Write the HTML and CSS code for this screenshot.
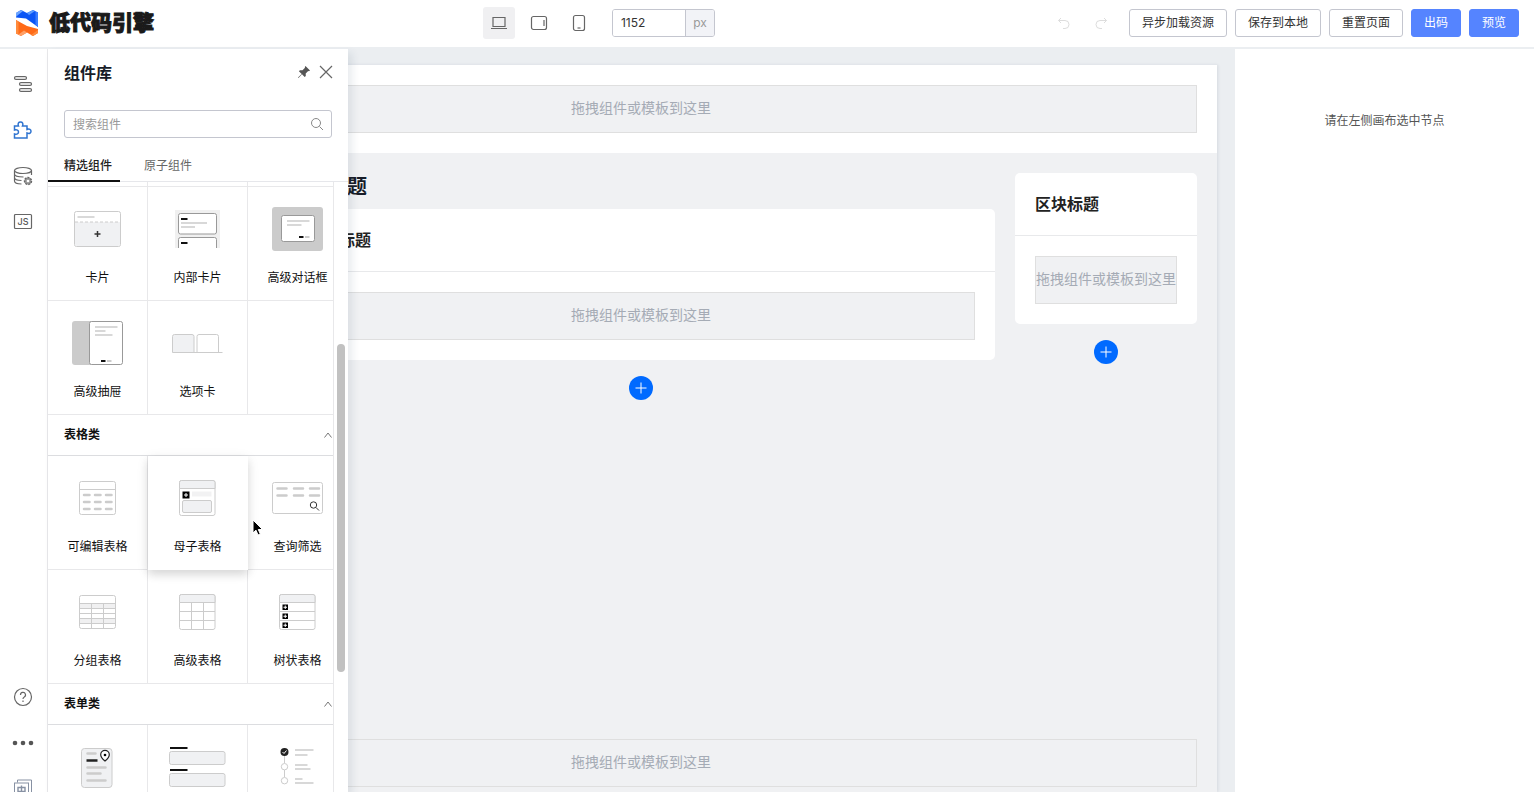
FILE: index.html
```
<!DOCTYPE html>
<html lang="zh-CN">
<head>
<meta charset="utf-8">
<meta name="viewport" content="width=device-width, initial-scale=1">
<title>低代码引擎</title>
<link rel="stylesheet" href="styles.css">
</head>
<body>
<div class="app">
  <header class="topbar">
    <a class="brand" href="#">
      <svg width="24" height="28" viewBox="0 0 24 28" aria-hidden="true">
        <path d="M1 4 6 1 12 4 18 1 23 3.500V18L11 9.500 1 8.500Z" fill="#0b55f5"/>
        <path d="M1 4 6 1 8 2 3 6 1 8Z" fill="#6ea6ff"/>
        <path d="M12 4 18 1 20 2 14 6Z" fill="#5c9cff"/>
        <path d="M20.500 2.500 23 3.500V18L20.500 16Z" fill="#3a7dff"/>
        <path d="M1 11 12 17 23 20V24L18 27 12 23.500 6 27 1 24.500Z" fill="#ff6a18"/>
        <path d="M1 11 3.500 12.500V25.500L1 24.500Z" fill="#ff8b3d"/>
        <path d="M6 27 3.500 25.500 9 21.500 12 23.500Z" fill="#ffa066"/>
        <path d="M18 27 16 26 23 21V24Z" fill="#ff8b3d"/>
      </svg>
      <span class="brand-name">低代码引擎</span>
    </a>
    <div class="devices">
      <button class="device is-active" type="button" aria-label="桌面"><svg width="18" height="16" viewBox="0 0 18 16"><path d="M3 2.500h12v9H3zM1 13.500h16" class="ln"/></svg></button>
      <button class="device" type="button" aria-label="平板"><svg width="18" height="16" viewBox="0 0 18 16"><rect x="1.500" y="1.500" width="15" height="13" rx="2" class="ln"/><path d="M14 5v6" class="ln"/></svg></button>
      <button class="device" type="button" aria-label="手机"><svg width="14" height="18" viewBox="0 0 14 18"><rect x="1.500" y="1.500" width="11" height="15" rx="2" class="ln"/><path d="M5.500 14h3" class="ln"/></svg></button>
      <label class="size"><input type="text" value="1152" aria-label="画布宽度"><span>px</span></label>
    </div>
    <div class="actions">
      <button class="history" type="button" aria-label="撤销"><svg width="14" height="14" viewBox="0 0 14 14"><path d="M4 2 1.500 4.500 4 7M1.500 4.500H8a4 4 0 0 1 0 8H6"/></svg></button>
      <button class="history" type="button" aria-label="重做"><svg width="14" height="14" viewBox="0 0 14 14"><path d="M10 2l2.500 2.500L10 7M12.500 4.500H6a4 4 0 0 0 0 8h2"/></svg></button>
      <button class="btn" type="button">异步加载资源</button>
      <button class="btn" type="button">保存到本地</button>
      <button class="btn" type="button">重置页面</button>
      <button class="btn primary" type="button">出码</button>
      <button class="btn primary" type="button">预览</button>
    </div>
  </header>

  <div class="workspace">
    <nav class="rail">
      <button type="button" aria-label="大纲树"><svg width="20" height="20" viewBox="0 0 20 20"><g class="ln" fill="#ddd"><rect x="1.500" y="2.500" width="12" height="3" rx="1.500"/><rect x="6.500" y="8.500" width="12" height="3" rx="1.500"/><rect x="6.500" y="14.500" width="12" height="3" rx="1.500"/></g></svg></button>
      <button type="button" aria-label="组件库" class="is-active"><svg width="20" height="20" viewBox="0 0 20 20"><path d="M1.500 6H5.500C4.500 3.500 5.500 2 7.500 2s3 1.500 2 4H14V9.500c2.500-1 4 0 4 1.800s-1.500 2.700-4 1.700V18H1.500V14c2.500.8 4-.3 4-2s-1.500-2.800-4-2Z"/></svg></button>
      <button type="button" aria-label="数据源"><svg width="20" height="20" viewBox="0 0 20 20"><g class="ln"><ellipse cx="10" cy="4.500" rx="8.500" ry="3"/><path d="M1.500 4.500V15c0 2 3 3 7 3M18.500 4.500V9M1.500 8c0 2 4 3 9 3M1.500 11.500c0 2 3 3 7 3"/></g><circle cx="15" cy="15" r="3.500" fill="#999" stroke="#666" stroke-dasharray="2 1.100" stroke-width="1.400"/><circle cx="15" cy="15" r="1.300" fill="#fff"/></svg></button>
      <button type="button" aria-label="源码面板"><svg width="20" height="18" viewBox="0 0 20 18"><rect x="1.500" y="1.500" width="17" height="14" rx="1" class="ln"/><text x="10" y="12" text-anchor="middle" class="js">JS</text></svg></button>
      <div class="rail-end">
        <button type="button" aria-label="帮助"><svg width="20" height="20" viewBox="0 0 20 20"><circle cx="10" cy="10" r="8.500" class="ln"/><path d="M7.500 8a2.500 2.500 0 1 1 3.500 2.200c-.8.400-1 .8-1 1.800M10 13.500V15" class="ln"/></svg></button>
        <button type="button" aria-label="更多"><svg width="22" height="6" viewBox="0 0 22 6"><g fill="#555"><circle cx="3" cy="3" r="2.300"/><circle cx="11" cy="3" r="2.300"/><circle cx="19" cy="3" r="2.300"/></g></svg></button>
        <button type="button" aria-label="切换语言"><svg width="20" height="20" viewBox="0 0 20 20"><g fill="none" stroke="#8791a3"><path d="M4.500 3.500V1h14v14h-3"/><rect x="1.500" y="4" width="14" height="14"/><path d="M5 8.500h7v4H5zM8.500 6.500v9" stroke-width="1.400"/></g></svg></button>
      </div>
    </nav>

    <main class="canvas">
      <div class="page">
        <div class="page-head"><div class="slot">拖拽组件或模板到这里</div></div>
        <div class="page-body">
          <section class="group">
            <h2>分组标题</h2>
            <article class="block">
              <h3>区块标题</h3>
              <div class="block-body"><div class="slot">拖拽组件或模板到这里</div></div>
            </article>
            <button class="add" type="button" aria-label="添加区块"><svg width="12" height="12" viewBox="0 0 12 12"><path d="M6 0.500v11M0.500 6h11"/></svg></button>
          </section>
          <aside class="side">
            <article class="block">
              <h3>区块标题</h3>
              <div class="block-body"><div class="slot">拖拽组件或模板到这里</div></div>
            </article>
            <button class="add" type="button" aria-label="添加区块"><svg width="12" height="12" viewBox="0 0 12 12"><path d="M6 0.500v11M0.500 6h11"/></svg></button>
          </aside>
        </div>
        <div class="page-foot"><div class="slot">拖拽组件或模板到这里</div></div>
      </div>
    </main>

    <aside class="props">请在左侧画布选中节点</aside>

    <section class="panel">
      <div class="panel-head">
        <h1>组件库</h1>
        <button type="button" aria-label="固定"><svg width="14" height="14" viewBox="0 0 14 14"><path d="M8.500 1 13 5.500l-1 .7-.8-.2-2.500 2.500.1 2.600-1.100 1L5 9.300 1.500 13 1 12.500 4.700 9 1.900 6.300l1-1.100 2.600.1L8 2.800 7.800 2Z" fill="#555"/></svg></button>
        <button type="button" aria-label="关闭"><svg width="14" height="14" viewBox="0 0 14 14"><path d="M1 1l12 12M13 1 1 13" class="ln"/></svg></button>
      </div>
      <div class="search">
        <input type="text" placeholder="搜索组件" aria-label="搜索组件">
        <svg width="14" height="14" viewBox="0 0 14 14"><circle cx="6" cy="6" r="4.500"/><path d="M9.500 9.500l3.500 3.500"/></svg>
      </div>
      <div class="tabs" role="tablist">
        <button type="button" role="tab" aria-selected="true">精选组件</button>
        <button type="button" role="tab" aria-selected="false">原子组件</button>
      </div>
      <div class="list">
        <div class="cells tail"><div></div><div></div><div></div></div>
        <div class="cells">
          <div class="cell"><svg viewBox="0 0 61 48"><rect x="7.500" y="6.500" width="46" height="35" rx="2" class="g"/><path d="M8 17h45v22a2 2 0 0 1-2 2H10a2 2 0 0 1-2-2z" fill="#f0f1f3"/><path d="M8 17h45" class="g" stroke-dasharray="3 2"/><path d="M10.500 12h17" class="b"/><path d="M30.500 26v6M27.500 29h6" stroke="#333" stroke-width="1.500"/></svg><span>卡片</span></div>
          <div class="cell"><svg viewBox="0 0 61 48"><path d="M8 5h45v38H8z" fill="#f0f0f0"/><rect x="11.500" y="8.500" width="38" height="20.500" rx="2" class="d"/><path d="M11.500 43V34.500a2 2 0 0 1 2-2h34a2 2 0 0 1 2 2V43" class="d"/><path d="M14 18h26M14 22h14" class="b"/><path d="M14 14h6.500M14 38h6.500" class="k"/></svg><span>内部卡片</span></div>
          <div class="cell"><svg viewBox="0 0 61 48"><rect x="5" y="2" width="51" height="44" rx="3" fill="#cbcbcb"/><rect x="14.500" y="10.500" width="33" height="26" rx="2" class="d"/><path d="M20 16h22.500M20 20h14.500" class="b"/><path d="M32 32h4.500" class="k"/><path d="M38 32h4.500" class="d"/></svg><span>高级对话框</span></div>
          <div class="cell"><svg viewBox="0 0 61 48"><rect x="5" y="2" width="24" height="44" rx="3" fill="#cbcbcb"/><rect x="22.500" y="2.500" width="33" height="43" rx="2" class="d"/><path d="M28 8h22.500M28 12h10.500M28 16h17.500" class="b"/><path d="M34 42h4.500" class="k"/><path d="M40 42h4.500" class="d"/></svg><span>高级抽屉</span></div>
          <div class="cell"><svg viewBox="0 0 61 48"><path d="M5.500 33.500V17.500a2 2 0 0 1 2-2h17.500a2 2 0 0 1 2 2v16" class="g f"/><path d="M30 33.500V17.500a2 2 0 0 1 2-2h17.500a2 2 0 0 1 2 2v16M5.500 33.500h50" class="g"/></svg><span>选项卡</span></div>
          <div class="cell empty"></div>
        </div>
        <button class="category" type="button"><span>表格类</span><svg width="8" height="6" viewBox="0 0 8 6"><path d="M.5 5.500 4 1l3.500 4.500"/></svg></button>
        <div class="cells">
          <div class="cell"><svg viewBox="0 0 61 48"><rect x="12.500" y="7.500" width="36" height="33" rx="2" class="g"/><path d="M12.500 15.500h36" class="g"/><path d="M17 21h5.500M28 21h5.500M39 21h5.500M17 28h5.500M28 28h5.500M39 28h5.500M17 35h5.500M28 35h5.500M39 35h5.500" class="t"/></svg><span>可编辑表格</span></div>
          <div class="cell is-hover"><svg viewBox="0 0 61 48"><rect x="12.500" y="6.500" width="35.500" height="35" rx="2" class="g"/><path d="M12.500 14.500V8.500a2 2 0 0 1 2-2H46a2 2 0 0 1 2 2v6z" class="g f"/><path d="M25 17.500h19.500v5H25z" fill="#f2f2f3"/><rect x="15.500" y="26.500" width="29" height="12" rx="1.500" class="g f"/><path d="M15.500 17.500h7v7h-7z"/><path d="M19 19v4M17 21h4" stroke="#fff"/></svg><span>母子表格</span></div>
          <div class="cell"><svg viewBox="0 0 61 48"><rect x="5.500" y="8.500" width="50" height="31" rx="2" class="g"/><path d="M10.500 14.500h9M27 14.500h9M43 14.500h9M10.500 21.500h9M27 21.500h9M43 21.500h9" class="t"/><circle cx="46.500" cy="31" r="3.200" fill="none" stroke="#333"/><path d="M49 33.500l3 3" stroke="#333"/></svg><span>查询筛选</span></div>
          <div class="cell"><svg viewBox="0 0 61 48"><path d="M12.500 15.500h36v5h-36zM12.500 30.500h36v5h-36z" fill="#f0f0f1"/><rect x="12.500" y="7.500" width="36" height="33" rx="2" class="g n"/><path d="M12.500 15.500h36M12.500 20.500h36M12.500 25.500h36M12.500 30.500h36M12.500 35.500h36M24.500 15.500v25M36.500 15.500v25" class="g"/></svg><span>分组表格</span></div>
          <div class="cell"><svg viewBox="0 0 61 48"><rect x="12.500" y="6.500" width="35.500" height="35" rx="2" class="g"/><path d="M12.500 14.500V8.500a2 2 0 0 1 2-2H46a2 2 0 0 1 2 2v6z" class="g f"/><path d="M12.500 23.500H48M12.500 32.500H48M24.500 14.500v27M36.500 14.500v27" class="g"/></svg><span>高级表格</span></div>
          <div class="cell"><svg viewBox="0 0 61 48"><rect x="12.500" y="6.500" width="35.500" height="35" rx="2" class="g"/><path d="M12.500 14.500V8.500a2 2 0 0 1 2-2H46a2 2 0 0 1 2 2v6z" class="g f"/><path d="M12.500 23.500H48M12.500 32.500H48" class="g"/><path d="M15.500 16.500h5.500v5.500h-5.500zM15.500 25.500h5.500v5.500h-5.500zM15.500 34.500h5.500v5.500h-5.500z"/><path d="M18.250 17.500v3.500M16.500 19.250H20M18.250 26.500v3.500M16.500 28.250H20M18.250 35.500v3.500M16.500 37.250H20" stroke="#fff"/></svg><span>树状表格</span></div>
        </div>
        <button class="category" type="button"><span>表单类</span><svg width="8" height="6" viewBox="0 0 8 6"><path d="M.5 5.500 4 1l3.500 4.500"/></svg></button>
        <div class="cells">
          <div class="cell" aria-label="表单"><svg viewBox="0 0 61 48"><rect x="14.500" y="5.500" width="30.500" height="39" rx="3" class="g f"/><path d="M20.500 10.500h8M20.500 24.500h18M20.500 30.500h13M20.500 37.500h18" class="t"/><path d="M19.500 17.500h11" stroke="#222" stroke-width="2.500"/><path d="M38 18c-3-2.500-4.300-4.300-4.300-6.300a4.300 4.300 0 0 1 8.600 0c0 2-1.300 3.800-4.300 6.300Z" fill="#fff" stroke="#222" stroke-width="1.200"/><circle cx="38" cy="12" r="1.300"/></svg></div>
          <div class="cell" aria-label="分组表单"><svg viewBox="0 0 61 48"><rect x="2.500" y="8.500" width="55.500" height="13" rx="2" class="g f"/><rect x="2.500" y="30.500" width="55.500" height="13" rx="2" class="g f"/><path d="M3 5h17.500M3 27h17.500" class="k"/></svg></div>
          <div class="cell" aria-label="分步表单"><svg viewBox="0 0 61 48"><path d="M17.500 13v7M17.500 27v7" class="g"/><circle cx="17.500" cy="9" r="4" fill="#222"/><path d="M15.500 9l1.500 1.500 2.500-3" stroke="#fff" fill="none"/><circle cx="17.500" cy="23.700" r="3.200" class="g"/><circle cx="17.500" cy="37.700" r="3.200" class="g"/><path d="M28 7h18.500M28 12h12.500M28 22h12.500M28 26h15.500M28 36h7.500M28 40h18.500" class="b"/></svg></div>
        </div>
      </div>
      <div class="thumb"></div>
    </section>
    <svg class="cursor" width="12" height="18" viewBox="0 0 12 18" aria-hidden="true"><path d="M1 1v13l3-2.800L6 16l2.300-1-2-4.500H10.500Z" fill="#000" stroke="#fff"/></svg>
  </div>
</div>
</body>
</html>
```
FILE: styles.css
```
* { box-sizing: border-box; }

body {
  margin: 0;
  font-family: Inter, "Noto Sans CJK SC", sans-serif;
  font-size: 12px;
  line-height: 20px;
  color: #222;
}

h1, h2, h3 { margin: 0; }

button {
  font: inherit;
  color: inherit;
  padding: 0;
  border: 0;
  background: none;
  cursor: pointer;
}

svg { display: block; flex: none; }
.ln { stroke: #666; stroke-width: 1.2; }
.ln:not(g) { fill: none; }
g.ln:not([fill]) { fill: none; }

.app {
  height: 100vh;
  display: flex;
  flex-direction: column;
  overflow: hidden;
}

/* Top bar */
.topbar {
  flex: none;
  display: flex;
  align-items: center;
  justify-content: space-between;
  height: 49px;
  padding: 0 15px 1px;
  border-bottom: 2px solid #ebeef1;
}

.brand {
  display: flex;
  align-items: center;
  gap: 10px;
  color: #1a1a1a;
  text-decoration: none;
}

.brand-name {
  font-size: 21px;
  font-weight: 900;
  line-height: 28px;
  -webkit-text-stroke: 1px #1a1a1a;
}

.devices { display: flex; align-items: center; gap: 8px; margin-right: 6px; }

.device {
  display: grid;
  place-items: center;
  width: 32px;
  height: 32px;
  border-radius: 3px;
}

.device.is-active { background: #f0f0f2; }

.size {
  display: flex;
  height: 28px;
  margin-left: 9px;
  border: 1px solid #c4c6cf;
  border-radius: 3px;
  overflow: hidden;
}

.size input {
  width: 72px;
  padding: 0 8px;
  border: 0;
  outline: 0;
  font: inherit;
  color: #333;
}

.size span {
  width: 29px;
  border-left: 1px solid #c4c6cf;
  background: #f2f3f7;
  color: #999;
  line-height: 26px;
  text-align: center;
}

.actions { display: flex; align-items: center; gap: 8px; }

.history {
  display: grid;
  place-items: center;
  width: 29px;
  height: 28px;
}

.history svg { fill: none; stroke: #ddd; }

.btn {
  height: 28px;
  padding: 0 12px;
  border: 1px solid #c4c6cf;
  border-radius: 3px;
  color: #333;
}

.history + .btn { margin-left: 5px; }

.btn.primary { border-color: #5584ff; background: #5584ff; color: #fff; }

/* Workspace */
.workspace {
  position: relative;
  flex: 1;
  min-height: 0;
  display: flex;
}

.rail {
  flex: none;
  display: flex;
  flex-direction: column;
  width: 48px;
  padding-top: 12px;
  border-right: 1px solid #e8e8ea;
  overflow: hidden;
}

.rail button {
  display: grid;
  place-items: center;
  width: 46px;
  height: 46px;
}

.rail .is-active svg { fill: none; stroke: #2f74d0; stroke-width: 1.5; }
.rail-end { margin: auto 0 -20px; }
.js { font: 500 9px Inter, sans-serif; fill: #555; }

.canvas {
  flex: 1;
  min-width: 0;
  display: flex;
  padding: 16px 18px 0 17px;
  background: #ebeef1;
}

.page {
  flex: 1;
  min-width: 0;
  display: flex;
  flex-direction: column;
  background: #f0f1f3;
  box-shadow: 1px 0 3px rgba(30, 40, 80, .1);
}

.page-head { padding: 20px; background: #fff; }
.page-foot { padding: 0 20px 5px; }

.page-body {
  flex: 1;
  display: grid;
  grid-template-columns: 182px minmax(0, 1fr) 182px;
  gap: 20px;
  padding: 20px;
}

.group { grid-column: 2; }
.group h2 { padding-bottom: 8px; font-size: 20px; line-height: 28px; font-weight: 700; color: #171c28; }

.slot {
  display: grid;
  place-items: center;
  height: 48px;
  padding-bottom: 2px;
  border: 1px solid #dfdfdf;
  background: #f0f1f3;
  color: #a5abb5;
  font-size: 14px;
  white-space: nowrap;
}

.block { border-radius: 5px; background: #fff; }

.block h3 {
  padding: 18px 20px;
  border-bottom: 1px solid #e8e9eb;
  font-size: 16px;
  line-height: 26px;
  font-weight: 700;
}

.block-body { padding: 20px; }

.add {
  display: grid;
  place-items: center;
  width: 24px;
  height: 24px;
  margin: 16px auto 0;
  border-radius: 50%;
  background: #006aff;
}

.add svg { stroke: #fff; }

.props {
  flex: none;
  width: 299px;
  padding-top: 62px;
  text-align: center;
  color: #555;
}

/* Component library, floating over the canvas */
.panel {
  position: absolute;
  top: 0;
  bottom: 0;
  left: 48px;
  width: 300px;
  display: flex;
  flex-direction: column;
  background: #fff;
  box-shadow: 4px 4px 8px rgba(31, 56, 88, .1);
}

.panel-head {
  display: flex;
  align-items: center;
  gap: 8px;
  height: 48px;
  padding: 0 15px 2px 16px;
}

.panel-head h1 { flex: 1; padding-top: 2px; font-size: 16px; line-height: 24px; font-weight: 700; color: #171c28; }

.search {
  display: flex;
  align-items: center;
  height: 28px;
  margin: 13px 16px 0;
  padding: 0 7px 0 8px;
  border: 1px solid #c4c6cf;
  border-radius: 3px;
}

.search input { flex: 1; min-width: 0; padding: 1px 0 0; border: 0; outline: 0; font: inherit; }
.search input::placeholder { color: #999; }
.search svg { fill: none; stroke: #888; }

.tabs { display: flex; gap: 8px; height: 44px; border-bottom: 1px solid #e6e7eb; }
.tabs button { padding: 14px 8px 0 16px; color: #666; border-bottom: 2px solid transparent; height: 44px; }
.tabs [aria-selected="true"] { color: #222; font-weight: 500; border-color: #111; }

.list {
  flex: 1;
  min-height: 0;
  width: 286px;
  border-right: 1px solid #e8e8ea;
  overflow: hidden;
}

.cells { display: grid; grid-template-columns: repeat(3, 100px); }
.tail > div { height: 5px; border-right: 1px solid #e8e8ea; border-bottom: 1px solid #e8e8ea; }

.cell {
  display: flex;
  flex-direction: column;
  align-items: center;
  gap: 15px;
  height: 114px;
  padding-top: 18px;
  border-right: 1px solid #e8e8ea;
  border-bottom: 1px solid #e8e8ea;
  color: #111;
  white-space: nowrap;
}

.cell svg { width: 61px; height: 48px; }

.cell.is-hover {
  position: relative;
  background: #fff;
  border-color: #fff;
  box-shadow: 0 5px 8px rgba(0, 0, 0, .09), 0 3px 12px rgba(0, 0, 0, .09);
}

.g { fill: none; stroke: #ccc; }
rect.g, circle.g { fill: #fff; }
.g.f { fill: #f0f1f3; }
.g.n { fill: none; }
.d { fill: #fff; stroke: #999; }
.b { fill: none; stroke: #ccc; stroke-width: 1.5; }
.k { fill: none; stroke: #111; stroke-width: 2; }
.t { fill: none; stroke: #ccc; stroke-width: 2.5; stroke-linecap: round; }

.category {
  display: flex;
  align-items: center;
  justify-content: space-between;
  width: 100%;
  height: 41px;
  padding: 0 1px 0 16px;
  border-bottom: 1px solid #dcdde0;
  font-weight: 700;
  color: #111;
}

.category svg { fill: none; stroke: #777; }

.thumb {
  position: absolute;
  top: 295px;
  right: 3px;
  width: 8px;
  height: 328px;
  border-radius: 4px;
  background: #c1c1c1;
}

.cursor { position: absolute; top: 470px; left: 252px; }
```
